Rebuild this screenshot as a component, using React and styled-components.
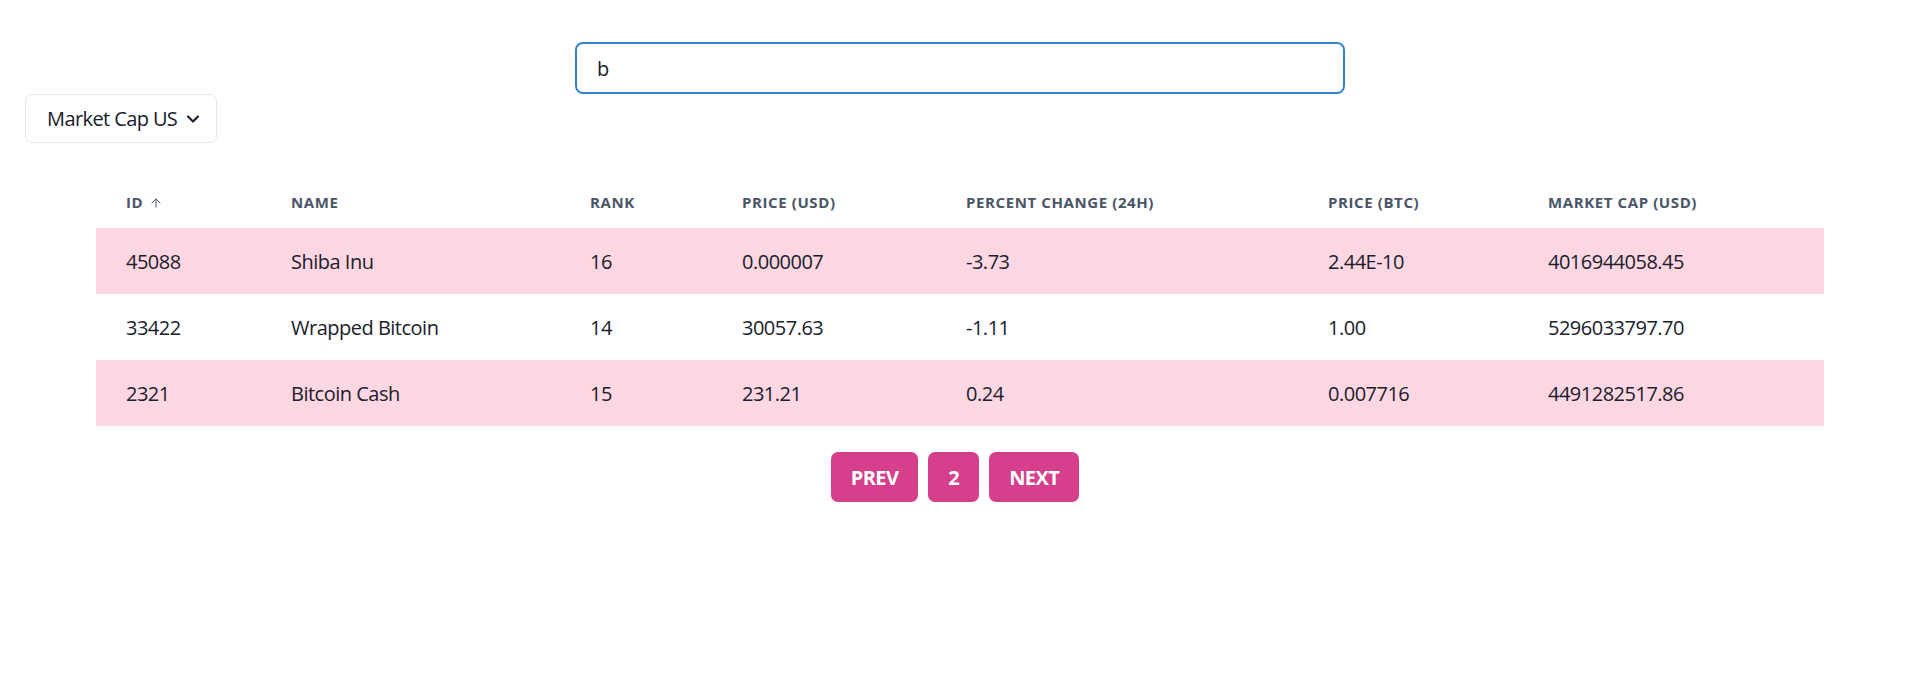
import React from "react";
import styled, { createGlobalStyle } from "styled-components";
import { ArrowUp, ChevronDown } from "lucide-react";

const GlobalStyle = createGlobalStyle`
  html, body { margin: 0; padding: 0; background: #ffffff; }
  body {
    font-family: "Open Sans", "Noto Sans", "Liberation Sans", sans-serif;
    color: #1a202c;
  }
  * { box-sizing: border-box; }
`;

const Page = styled.div`
  width: 1920px;
  padding-bottom: 40px;
`;

const SearchInput = styled.input`
  display: block;
  width: 40%;
  height: 50px;
  margin: 43px auto 0;
  padding: 0 20px;
  font-family: inherit;
  font-size: 20px;
  color: #1a202c;
  border: 1px solid #3182ce;
  box-shadow: 0 0 0 1px #3182ce;
  border-radius: 7px;
  outline: none;
  background: #fff;
  caret-color: #1a202c;
`;

const SelectBox = styled.div`
  display: inline-flex;
  align-items: center;
  margin: 1px 0 0 25px;
  width: 192px;
  height: 49px;
  padding: 0 13px 0 21px;
  border: 1px solid #e2e8f0;
  border-radius: 7px;
  font-size: 20px;
  letter-spacing: -0.03em;
  color: #1a202c;
  background: #fff;
`;

const SelectChevron = styled(ChevronDown)`
  margin-left: auto;
  color: #1a202c;
`;

const Table = styled.table`
  width: 90%;
  margin: 34px auto 0;
  border-collapse: collapse;
  table-layout: fixed;
`;

const Th = styled.th`
  text-align: left;
  padding: 15px 30px 16px;
  line-height: 20px;
  font-size: 15px;
  font-weight: 700;
  letter-spacing: 0.04em;
  text-transform: uppercase;
  color: #4a5568;
  white-space: nowrap;
`;

const SortIcon = styled(ArrowUp)`
  vertical-align: -2px;
  margin-left: 6px;
  color: #4a5568;
`;

const Row = styled.tr`
  background: ${(p) => (p.$striped ? "#fed7e2" : "#ffffff")};
`;

const Td = styled.td`
  padding: 21px 30px 20px;
  line-height: 25px;
  height: 66px;
  font-size: 20px;
  letter-spacing: -0.025em;
  color: #1a202c;
  white-space: nowrap;
`;

const Pagination = styled.div`
  display: flex;
  justify-content: center;
  margin-top: 26px;
`;

const PageButton = styled.button`
  height: 50px;
  padding: 0 20px;
  margin-right: 10px;
  border: none;
  border-radius: 7px;
  background: #d53f8c;
  color: #fff;
  font-family: inherit;
  font-size: 20px;
  font-weight: 700;
  letter-spacing: -0.03em;
  cursor: pointer;
`;

const columns = [
  { label: "Id", width: 165, sort: true },
  { label: "Name", width: 299 },
  { label: "Rank", width: 152 },
  { label: "Price (USD)", width: 224 },
  { label: "Percent Change (24h)", width: 362 },
  { label: "Price (BTC)", width: 220 },
  { label: "Market Cap (USD)", width: 306 },
];

const rows = [
  ["45088", "Shiba Inu", "16", "0.000007", "-3.73", "2.44E-10", "4016944058.45"],
  ["33422", "Wrapped Bitcoin", "14", "30057.63", "-1.11", "1.00", "5296033797.70"],
  ["2321", "Bitcoin Cash", "15", "231.21", "0.24", "0.007716", "4491282517.86"],
];

export default function App() {
  return (
    <Page>
      <GlobalStyle />
      <SearchInput defaultValue="b" autoFocus />
      <SelectBox>
        <span>Market Cap US</span>
        <SelectChevron size={20} strokeWidth={2.6} />
      </SelectBox>
      <Table>
        <colgroup>
          {columns.map((c) => (
            <col key={c.label} style={{ width: c.width }} />
          ))}
        </colgroup>
        <thead>
          <tr>
            {columns.map((c) => (
              <Th key={c.label}>
                {c.label}
                {c.sort && <SortIcon size={14} strokeWidth={1.7} />}
              </Th>
            ))}
          </tr>
        </thead>
        <tbody>
          {rows.map((r, i) => (
            <Row key={r[0]} $striped={i % 2 === 0}>
              {r.map((v, j) => (
                <Td key={j}>{v}</Td>
              ))}
            </Row>
          ))}
        </tbody>
      </Table>
      <Pagination>
        <PageButton>PREV</PageButton>
        <PageButton>2</PageButton>
        <PageButton>NEXT</PageButton>
      </Pagination>
    </Page>
  );
}
